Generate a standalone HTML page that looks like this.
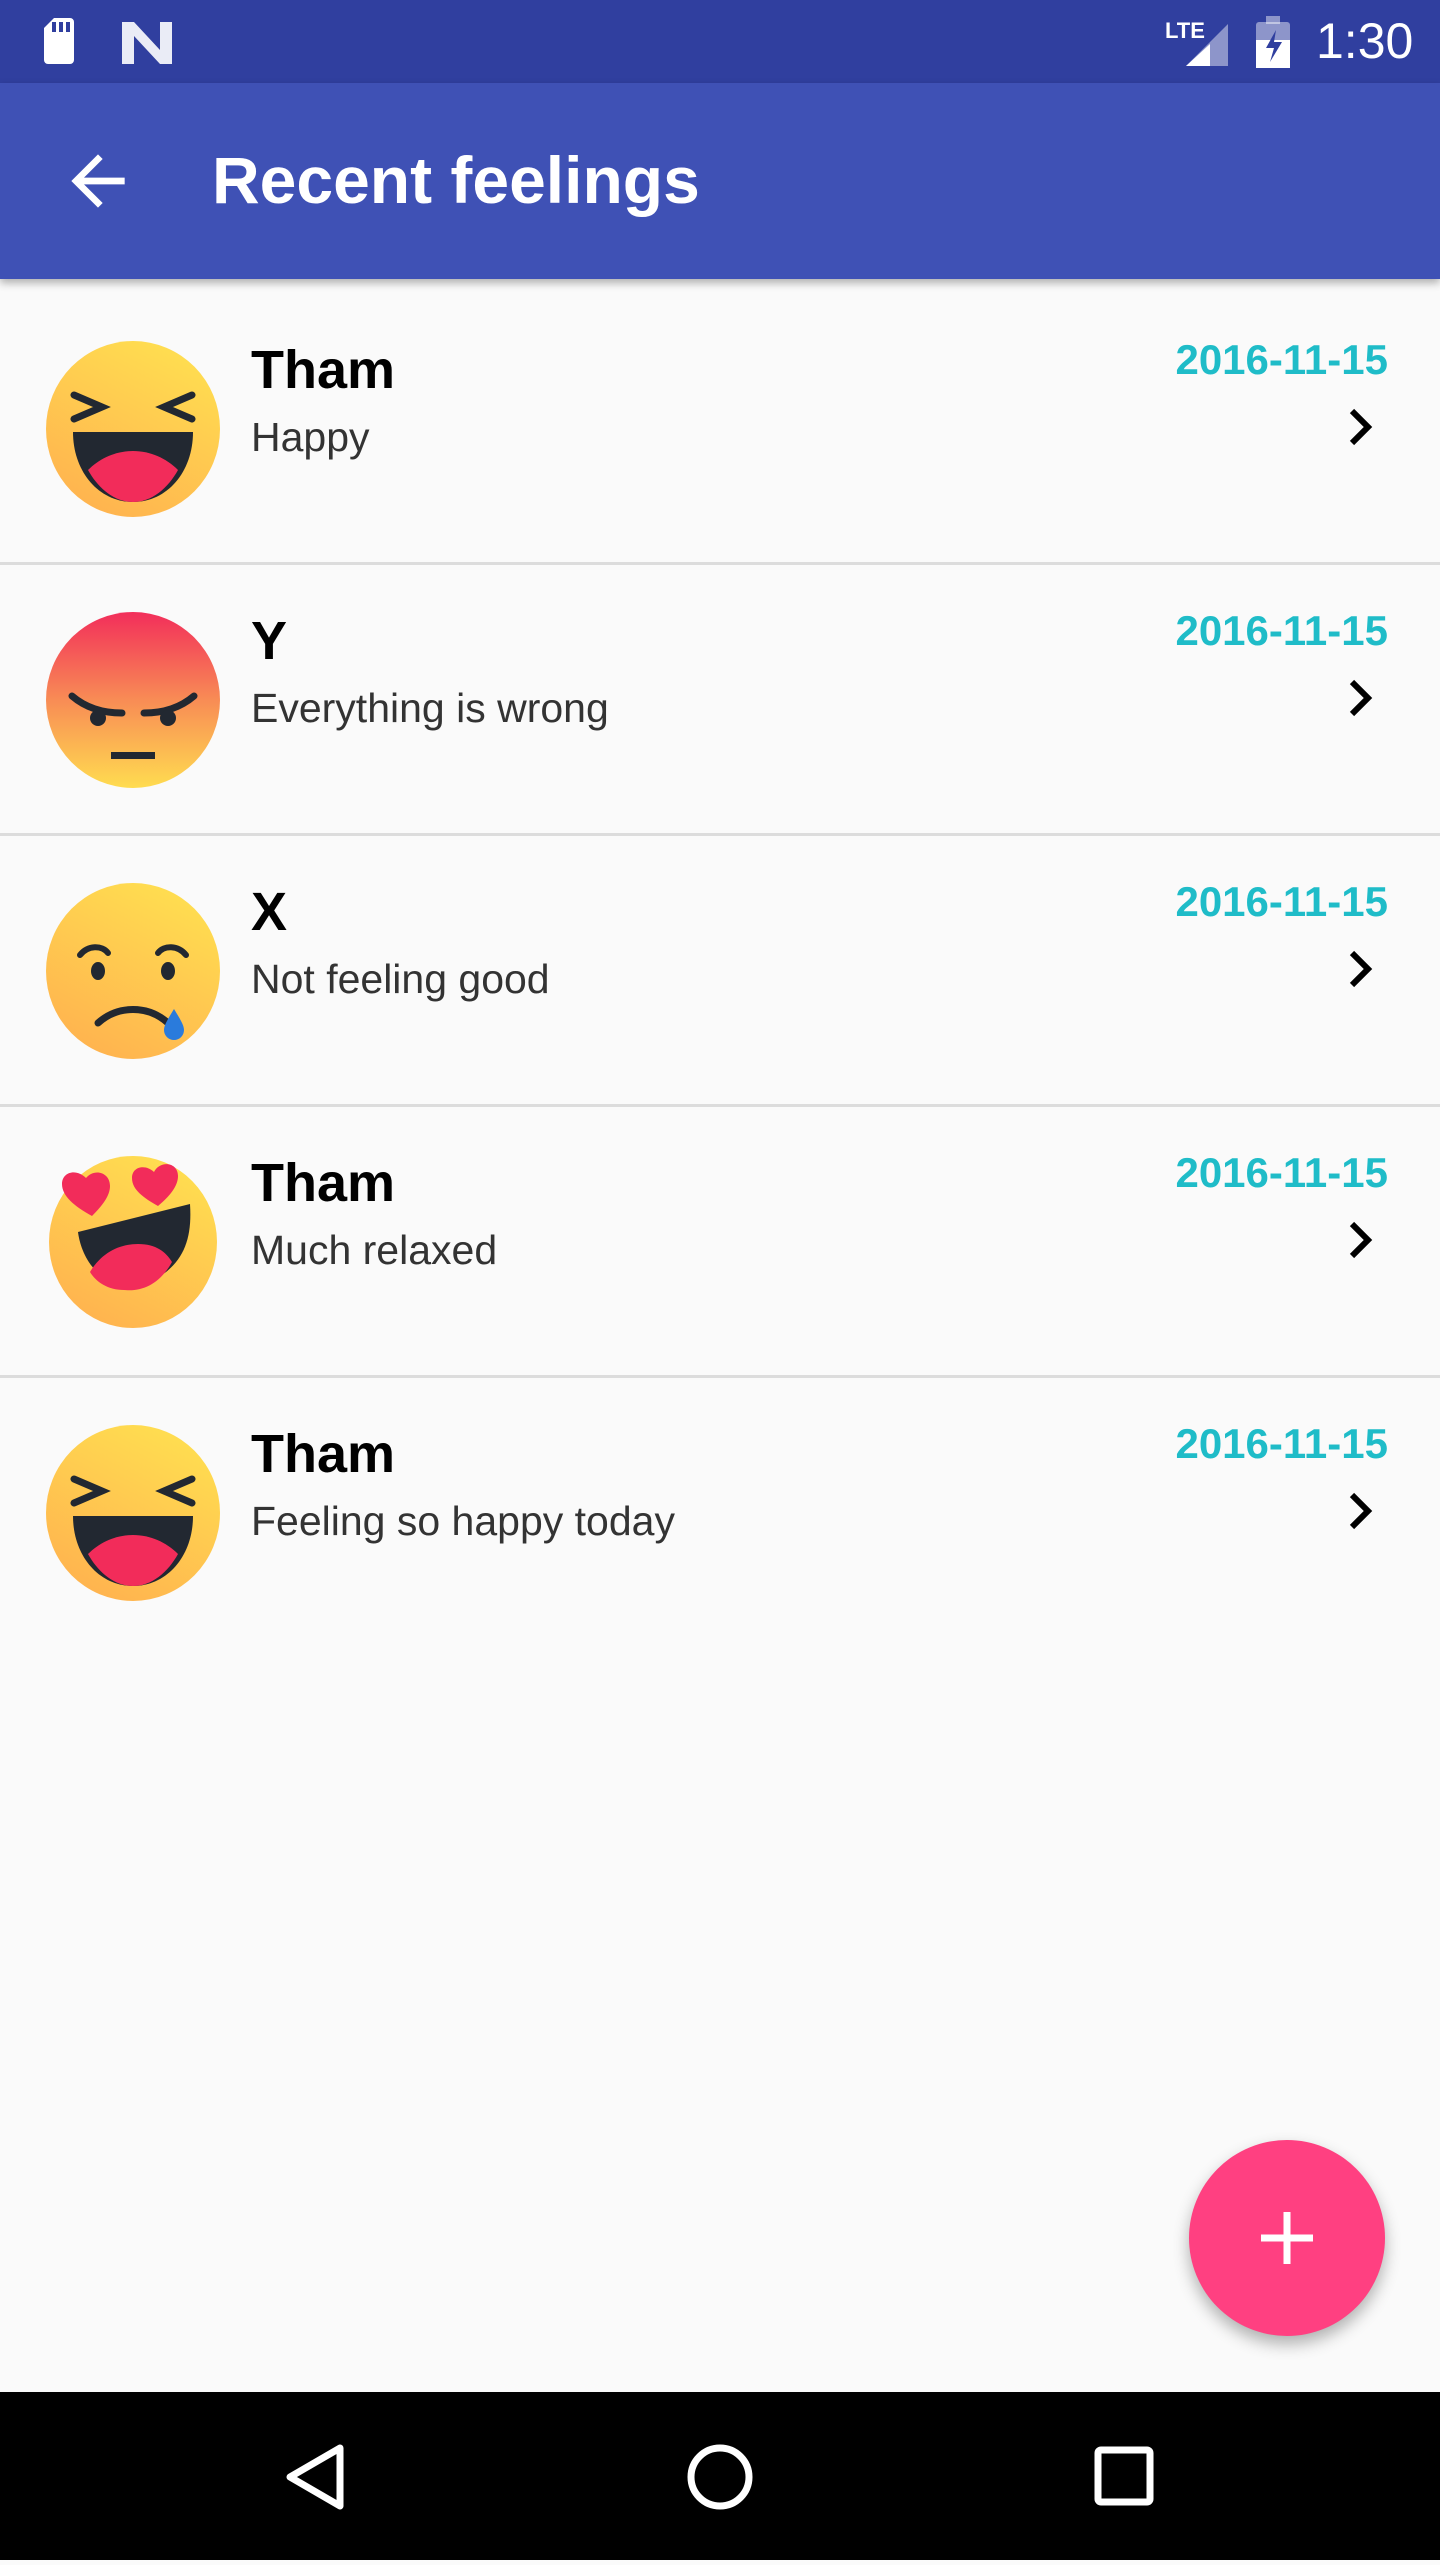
<!DOCTYPE html>
<html><head><meta charset="utf-8"><style>
*{margin:0;padding:0;box-sizing:border-box}
body{width:1440px;height:2560px;background:#fafafa;font-family:"Liberation Sans",sans-serif;position:relative;overflow:hidden}
.sb{position:absolute;left:0;top:0;width:1440px;height:83px;background:#303f9f}
.ab{position:absolute;left:0;top:83px;width:1440px;height:196px;background:#3f51b5;box-shadow:0 4px 8px rgba(0,0,0,.3);z-index:2}
.title{position:absolute;left:212px;top:64px;color:#fff;font-size:66px;font-weight:bold;line-height:1}
.row{position:absolute;left:0;width:1440px;height:271px}
.div{position:absolute;left:0;width:1440px;height:3px;background:#dcdcdc}
.name{position:absolute;left:251px;top:64px;font-size:54px;font-weight:bold;color:#000;line-height:1}
.sub{position:absolute;left:251px;top:138px;font-size:41px;color:#333;line-height:1}
.date{position:absolute;right:52px;top:60px;font-size:42px;font-weight:bold;color:#1fbcc8;line-height:1}
.chev{position:absolute;left:1346px;top:128px}
.emo{position:absolute;left:46px;top:62px}
.nav{position:absolute;left:0;top:2392px;width:1440px;height:168px;background:#000}
.fab{position:absolute;left:1189px;top:2140px;width:196px;height:196px;border-radius:50%;background:#ff4081;box-shadow:0 8px 16px rgba(0,0,0,.3)}
</style></head><body>
<div class="sb">
<svg width="1440" height="83" style="position:absolute;left:0;top:0">
<path d="M44 20h26a4 4 0 0 1 4 4v38a4 4 0 0 1-4 4H48a4 4 0 0 1-4-4V30l10-10z" fill="#fff" transform="translate(0,-2)"/>
<rect x="52" y="22" width="4" height="10" fill="#303f9f"/><rect x="59" y="22" width="4" height="10" fill="#303f9f"/><rect x="66" y="22" width="4" height="10" fill="#303f9f"/>
<path d="M122 22h12l26 28V22h12v42h-12L134 36v28h-12z" fill="#fff" opacity=".9"/>
<text x="1165" y="38" fill="#fff" font-size="22" font-weight="bold" font-family="Liberation Sans">LTE</text>
<path d="M1228 24v42h-42z" fill="#fff" opacity=".45"/><path d="M1210 44v22h-24z" fill="#fff"/>
<rect x="1256" y="22" width="34" height="46" rx="3" fill="#fff" opacity=".45"/><rect x="1266" y="16" width="14" height="8" fill="#fff" opacity=".45"/>
<rect x="1256" y="40" width="34" height="28" fill="#fff"/>
<path d="M1276 30l-10 18h8l-4 14 12-20h-8z" fill="#303f9f"/>
<text x="1316" y="58" fill="#fff" font-size="50" font-family="Liberation Sans">1:30</text>
</svg></div>
<div class="ab">
<svg width="80" height="80" style="position:absolute;left:58px;top:58px" viewBox="0 0 24 24"><path d="M20 11H7.8l5.6-5.6L12 4l-8 8 8 8 1.4-1.4L7.8 13H20z" fill="#fff"/></svg>
<div class="title">Recent feelings</div></div>

<svg width="0" height="0" style="position:absolute"><defs>
<linearGradient id="y" x1="0.75" y1="0" x2="0.25" y2="1"><stop offset="0" stop-color="#ffdf50"/><stop offset="1" stop-color="#ffb24f"/></linearGradient>
<linearGradient id="r" x1="0" y1="0" x2="0" y2="1"><stop offset="0" stop-color="#f22e5a"/><stop offset=".5" stop-color="#f88c55"/><stop offset="1" stop-color="#ffdc50"/></linearGradient>
</defs></svg>

<div class="div" style="top:562px"></div>
<div class="div" style="top:833px"></div>
<div class="div" style="top:1104px"></div>
<div class="div" style="top:1375px"></div>

<div class="row" style="top:279px">
<svg class="emo" width="174" height="176" viewBox="0 0 174 176"><ellipse cx="87" cy="88" rx="87" ry="88" fill="url(#y)"/><path d="M28 54l28 12-28 12M146 54l-28 12 28 12" stroke="#222831" stroke-width="7" fill="none" stroke-linecap="round"/><path d="M27 91h120c0 40-26 70-60 70S27 131 27 91z" fill="#222831"/><path d="M42 129c12-12 28-19 45-19s33 7 45 19c-10 18-26 32-45 32s-35-14-45-32z" fill="#f22c5a"/></svg>
<div class="name">Tham</div><div class="sub">Happy</div><div class="date">2016-11-15</div>
<svg class="chev" width="32" height="40" viewBox="0 0 32 40"><path d="M6 4l16 16L6 36" stroke="#000" stroke-width="6" fill="none"/></svg></div>

<div class="row" style="top:550px">
<svg class="emo" width="174" height="176" viewBox="0 0 174 176"><ellipse cx="87" cy="88" rx="87" ry="88" fill="url(#r)"/><path d="M26 84c14 12 32 17 50 17M148 84c-14 12-32 17-50 17" stroke="#222831" stroke-width="7" fill="none" stroke-linecap="round"/><circle cx="52" cy="106" r="8" fill="#222831"/><circle cx="122" cy="106" r="8" fill="#222831"/><rect x="65" y="140" width="44" height="7" fill="#222831"/></svg>
<div class="name">Y</div><div class="sub">Everything is wrong</div><div class="date">2016-11-15</div>
<svg class="chev" width="32" height="40" viewBox="0 0 32 40"><path d="M6 4l16 16L6 36" stroke="#000" stroke-width="6" fill="none"/></svg></div>

<div class="row" style="top:821px">
<svg class="emo" width="174" height="176" viewBox="0 0 174 176"><ellipse cx="87" cy="88" rx="87" ry="88" fill="url(#y)"/><path d="M34 72c8-10 22-10 28-2M112 70c6-8 20-8 28 2" stroke="#222831" stroke-width="6" fill="none" stroke-linecap="round"/><ellipse cx="52" cy="88" rx="7" ry="9" fill="#222831"/><ellipse cx="122" cy="88" rx="7" ry="9" fill="#222831"/><path d="M52 140c20-18 50-18 70 0" stroke="#222831" stroke-width="7" fill="none" stroke-linecap="round"/><path d="M128 126c-6 10-10 16-10 21a10 10 0 0 0 20 0c0-5-4-11-10-21z" fill="#2a7bdc"/></svg>
<div class="name">X</div><div class="sub">Not feeling good</div><div class="date">2016-11-15</div>
<svg class="chev" width="32" height="40" viewBox="0 0 32 40"><path d="M6 4l16 16L6 36" stroke="#000" stroke-width="6" fill="none"/></svg></div>

<div class="row" style="top:1092px">
<svg class="emo" width="180" height="190" viewBox="0 0 180 190" style="left:42px;top:52px"><ellipse cx="91" cy="98" rx="84" ry="86" fill="url(#y)"/><path d="M36 88l112-28c2 30-4 52-24 68-16 12-48 14-64 4-14-10-22-28-24-44z" fill="#222831"/><path d="M48 128c12-20 30-28 48-28s28 8 34 18c-12 22-30 30-48 28-16 0-28-8-34-18z" fill="#f22c5a"/><path d="M50 72c-18-10-30-20-30-32 0-12 14-16 24-6 8-10 24-6 24 8 0 10-8 20-18 30z" fill="#f22c5a"/><path d="M116 62c-14-8-26-16-26-28 0-12 14-14 22-6 6-12 24-10 24 4 0 10-8 20-20 30z" fill="#f22c5a"/></svg>
<div class="name">Tham</div><div class="sub">Much relaxed</div><div class="date">2016-11-15</div>
<svg class="chev" width="32" height="40" viewBox="0 0 32 40"><path d="M6 4l16 16L6 36" stroke="#000" stroke-width="6" fill="none"/></svg></div>

<div class="row" style="top:1363px">
<svg class="emo" width="174" height="176" viewBox="0 0 174 176"><ellipse cx="87" cy="88" rx="87" ry="88" fill="url(#y)"/><path d="M28 54l28 12-28 12M146 54l-28 12 28 12" stroke="#222831" stroke-width="7" fill="none" stroke-linecap="round"/><path d="M27 91h120c0 40-26 70-60 70S27 131 27 91z" fill="#222831"/><path d="M42 129c12-12 28-19 45-19s33 7 45 19c-10 18-26 32-45 32s-35-14-45-32z" fill="#f22c5a"/></svg>
<div class="name">Tham</div><div class="sub">Feeling so happy today</div><div class="date">2016-11-15</div>
<svg class="chev" width="32" height="40" viewBox="0 0 32 40"><path d="M6 4l16 16L6 36" stroke="#000" stroke-width="6" fill="none"/></svg></div>

<div class="fab"><svg width="196" height="196"><path d="M98 72v52M72 98h52" stroke="#fff" stroke-width="7"/></svg></div>

<div class="nav"><svg width="1440" height="168">
<path d="M340 56L290 85l50 29z" stroke="#fff" stroke-width="7" fill="none" stroke-linejoin="round"/>
<circle cx="720" cy="85" r="29" stroke="#fff" stroke-width="7" fill="none"/>
<rect x="1098" y="58" width="52" height="52" rx="3" stroke="#fff" stroke-width="7" fill="none"/>
</svg></div>
</body></html>
